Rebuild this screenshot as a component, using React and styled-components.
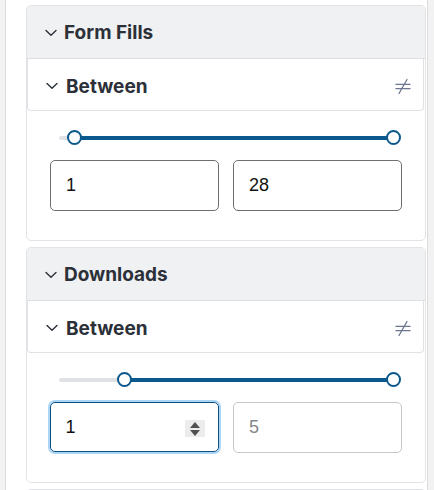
import React from "react";
import styled, { createGlobalStyle } from "styled-components";

const Global = createGlobalStyle`
  html, body { margin: 0; padding: 0; background: #f2f2f3; }
  body { font-family: Inter, "Liberation Sans", Arial, sans-serif; }
  * { box-sizing: border-box; }
`;

const Panel = styled.div`
  margin: 0 6px 0 5px;
  min-height: 100vh;
  background: #fff;
  border-left: 1px solid #dcdcde;
  border-right: 1px solid #dcdcde;
  padding: 5px 1px 0 20px;
  overflow: hidden;
`;

const Card = styled.section`
  border: 1px solid #e2e3e6;
  border-radius: 5px;
  background: #fff;
  margin-bottom: 6px;
  overflow: hidden;
`;

const GroupHeader = styled.div`
  height: 53px;
  background: #f0f1f3;
  border-bottom: 1px solid #dcdee1;
  border-radius: 4px 4px 0 0;
  display: flex;
  align-items: center;
  gap: 7px;
  padding: 1px 0 0 18px;
  color: #2c3038;
  font-size: 19px;
  font-weight: 700;
`;

const SubCard = styled.div`
  height: 52px;
  margin-right: 1px;
  border: 1px solid #e1e2e5;
  border-top: none;
  border-radius: 0 0 4px 4px;
  display: flex;
  align-items: center;
  gap: 8px;
  padding: 3px 12px 0 18px;
  color: #2c3038;
  font-size: 19px;
  font-weight: 700;
`;

const Title = styled.span`
  flex: 1;
`;

const Body = styled.div`
  padding: 19px 23px 29px;
`;

const SliderWrap = styled.div`
  position: relative;
  height: 15px;
  margin: 0 2px 15px 9px;
`;

const Track = styled.div`
  position: absolute;
  left: 0;
  right: 0;
  top: 6px;
  height: 4px;
  border-radius: 2px;
  background: #dfe1e5;
`;

const Range = styled.div`
  position: absolute;
  top: 5.5px;
  height: 4px;
  background: #0b588c;
`;

const Thumb = styled.div`
  position: absolute;
  top: 0;
  width: 15px;
  height: 15px;
  margin-left: -7.5px;
  border-radius: 50%;
  background: #fff;
  border: 2.5px solid #0b588c;
`;

const Inputs = styled.div`
  display: grid;
  grid-template-columns: 1fr 1fr;
  gap: 14px;
`;

const Field = styled.div`
  position: relative;
  height: ${(p) => (p.$focused ? "50px" : "51px")};
  border-radius: 5px;
  border: ${(p) =>
    p.$focused ? "1.5px solid #134f7c" : p.$muted ? "1px solid #c6c7c9" : "1px solid #6f6f72"};
  box-shadow: ${(p) => (p.$focused ? "0 0 0 2px #a9d5f6" : "none")};
  display: flex;
  align-items: center;
  padding-left: ${(p) => (p.$focused ? "14.5px" : "15px")};
  font-size: 18px;
  font-family: "Liberation Sans", Arial, sans-serif;
  color: ${(p) => (p.$muted ? "#85878b" : "#111")};
`;

const Spinner = styled.div`
  position: absolute;
  right: 13px;
  top: 17px;
  width: 20px;
  height: 17px;
  background: #ececec;
  display: flex;
  flex-direction: column;
  align-items: center;
  justify-content: center;
  gap: 2px;
`;

const Chevron = () => (
  <svg width="12" height="8" viewBox="0 0 12 8" fill="none">
    <path d="M1 1.5 L6 6.2 L11 1.5" stroke="#2c3038" strokeWidth="1.4" strokeLinecap="round" strokeLinejoin="round" />
  </svg>
);

const NotEqual = () => (
  <svg width="16" height="17" viewBox="0 0 16 17" fill="none">
    <path d="M1 6.3 H15 M1 10.7 H15 M12 1.5 L4 15.5" stroke="#6d7690" strokeWidth="1.3" strokeLinecap="round" />
  </svg>
);

const Tri = ({ up }) => (
  <svg width="10" height="6" viewBox="0 0 10 6">
    <path d={up ? "M0 6 L5 0 L10 6 Z" : "M0 0 L5 6 L10 0 Z"} fill="#505050" />
  </svg>
);

const groups = [
  { name: "Form Fills", low: "1", high: "28", lowPos: 0.044, highPos: 0.9795, focused: false },
  { name: "Downloads", low: "1", high: "5", lowPos: 0.1935, highPos: 0.9795, focused: true },
];

const Group = ({ g }) => (
  <Card>
    <GroupHeader>
      <Chevron />
      <span>{g.name}</span>
    </GroupHeader>
    <SubCard>
      <Chevron />
      <Title>Between</Title>
      <NotEqual />
    </SubCard>
    <Body>
      <SliderWrap>
        <Track />
        <Range style={{ left: `${g.lowPos * 100}%`, width: `${(g.highPos - g.lowPos) * 100}%` }} />
        <Thumb style={{ left: `${g.lowPos * 100}%` }} />
        <Thumb style={{ left: `${g.highPos * 100}%` }} />
      </SliderWrap>
      <Inputs>
        <Field $focused={g.focused}>
          {g.low}
          {g.focused && (
            <Spinner>
              <Tri up />
              <Tri />
            </Spinner>
          )}
        </Field>
        <Field $muted={g.focused}>{g.high}</Field>
      </Inputs>
    </Body>
  </Card>
);

export default function App() {
  return (
    <>
      <Global />
      <Panel>
        {groups.map((g) => (
          <Group key={g.name} g={g} />
        ))}
        <Card>
          <GroupHeader />
        </Card>
      </Panel>
    </>
  );
}
